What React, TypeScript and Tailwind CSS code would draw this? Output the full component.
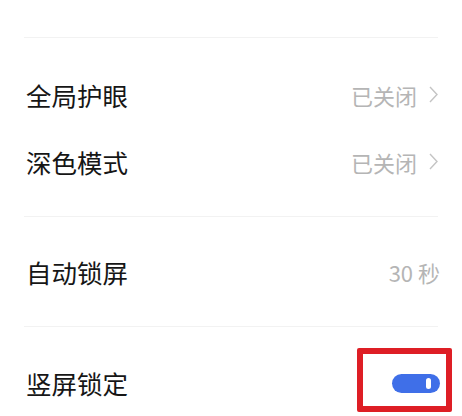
import React from "react";

function Chevron() {
  return (
    <svg width="9" height="17" viewBox="0 0 9 17" className="ml-[12px]">
      <path d="M1 1 L8 8.5 L1 16" fill="none" stroke="#c4c4c4" strokeWidth="1.4" />
    </svg>
  );
}

export default function App() {
  return (
    <div
      className="w-[462px] h-[416px] bg-white overflow-hidden"
      style={{ fontFamily: '"Noto Sans CJK SC", "Noto Sans", sans-serif' }}
    >
      <div className="h-[37px]" />
      <div className="mx-[24px] h-px bg-[#f2f2f2]" />
      <div className="pt-[23px] pb-[21px] pl-[26px] pr-[24px]">
        <div className="h-[67px] flex items-center justify-between">
          <span className="text-[25.5px] text-[#161616] leading-none">全局护眼</span>
          <div className="flex items-center">
            <span className="text-[22px] text-[#b5b5b5] leading-none">已关闭</span>
            <Chevron />
          </div>
        </div>
        <div className="h-[67px] flex items-center justify-between">
          <span className="text-[25.5px] text-[#161616] leading-none">深色模式</span>
          <div className="flex items-center">
            <span className="text-[22px] text-[#b5b5b5] leading-none">已关闭</span>
            <Chevron />
          </div>
        </div>
      </div>
      <div className="mx-[24px] h-px bg-[#f2f2f2]" />
      <div className="h-[109px] pl-[26px] pr-[22px] flex items-center justify-between">
        <span className="text-[25.5px] text-[#161616] leading-none">自动锁屏</span>
        <span className="text-[22px] text-[#b5b5b5] leading-none">30 秒</span>
      </div>
      <div className="mx-[24px] h-px bg-[#f2f2f2]" />
      <div className="h-[112px] pl-[26px] pr-[22px] flex items-center justify-between">
        <span className="text-[25.5px] text-[#161616] leading-none">竖屏锁定</span>
        <div className="relative w-[48px] h-[19px]">
          <div className="w-[48px] h-[19px] rounded-full bg-[#3f6fe8]">
            <div className="absolute left-[34px] top-[4px] w-[5px] h-[11px] rounded-full bg-white" />
          </div>
          <div className="absolute left-[-35px] top-[-26px] w-[95px] h-[64px] border-[6px] border-[#de1e25] rounded-[2px]" />
        </div>
      </div>
    </div>
  );
}
